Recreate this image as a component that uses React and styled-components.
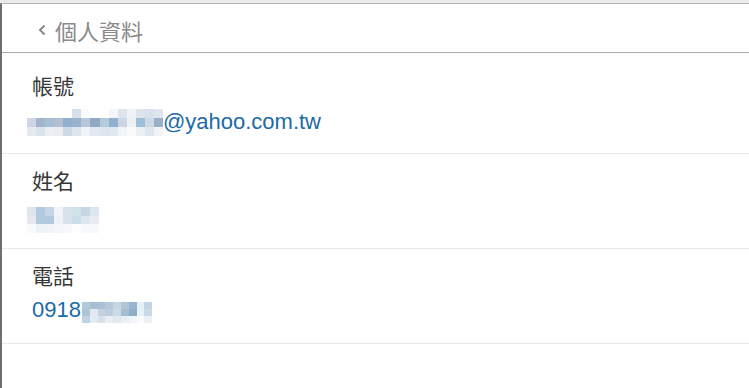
import React from "react";
import styled, { createGlobalStyle } from "styled-components";

const Global = createGlobalStyle`
  html, body { margin: 0; padding: 0; background: #ececec; }
  body { font-family: "Liberation Sans", "Noto Sans CJK TC", Arial, sans-serif; }
`;

const Page = styled.div`
  margin-top: 3px;
  min-height: 385px;
  box-sizing: border-box;
  background: #ffffff;
  border-top: 1px solid #b4b4b4;
  border-left: 2px solid #6f6f6f;
`;

const Header = styled.div`
  height: 49px;
  box-sizing: border-box;
  display: flex;
  align-items: center;
  gap: 8px;
  padding: 4px 0 0 36px;
  border-bottom: 1px solid #a9a9a9;
  color: #8a8a8a;
`;

const Title = styled.span`
  font-family: "Noto Sans CJK TC", sans-serif;
  font-size: 22px;
  line-height: 1;
  color: #8a8a8a;
`;

const Row = styled.div`
  box-sizing: border-box;
  height: ${(p) => (p.$first ? 101 : 95)}px;
  padding: ${(p) => (p.$first ? 16 : 10)}px 0 0 30px;
  border-bottom: 1px solid #e8e8e8;
`;

const Label = styled.div`
  font-family: "Noto Sans CJK TC", sans-serif;
  font-size: 21px;
  line-height: 32px;
  height: 32px;
  color: #363636;
`;

const Value = styled.div`
  margin-top: ${(p) => (p.$first ? 6 : 4)}px;
  height: 30px;
  display: flex;
  align-items: center;
  font-family: "Liberation Sans", Arial, sans-serif;
  font-size: 22px;
  color: #1c6aa6;
  white-space: nowrap;
`;

const Mosaic = styled.span`
  display: inline-grid;
  grid-template-columns: repeat(${(p) => p.$cols}, ${(p) => p.$cw}px);
  grid-auto-rows: ${(p) => p.$rh}px;
  margin-left: ${(p) => p.$ml}px;
  margin-top: ${(p) => p.$mt}px;
  flex: none;
`;

const Cell = styled.span`
  display: block;
`;

const emailCells = [
  ["#ffffff", "#ffffff", "#ffffff", "#ffffff", "#ffffff", "#d5e0ea", "#fbfcfd", "#ffffff", "#ffffff", "#f4f6f9", "#dde4ee", "#f0f3f6", "#dde4ee", "#d7e1ec", "#dfe5ee"],
  ["#cdd6e2", "#a4b6cc", "#a6bfd6", "#b4c0cf", "#8fb1cf", "#9ab3cc", "#b7c9d8", "#90aac6", "#b5cadb", "#90b0cf", "#cdd5e2", "#eef1f4", "#9dbfd9", "#cfd9e6", "#99afc8"],
  ["#e6eaf0", "#dbe3ec", "#ebeff4", "#eaecf2", "#ccd9e7", "#dee6ef", "#f0f3f8", "#e2e8f1", "#dde5ee", "#e0e8f0", "#f2f4f8", "#fafbfc", "#ebf0f5", "#dde6ef", "#f2f4f8"],
];

const nameCells = [
  ["#dde4ec", "#b1c9de", "#c5d6e5", "#f2f4f8", "#d8e2ea", "#d3e1ea", "#c8d6e4", "#dde6ef"],
  ["#e8e6ee", "#b3c9de", "#b3c9de", "#eef1f6", "#d8e2ea", "#cfdde8", "#dfe6ef", "#e6ecf2"],
  ["#f8f9fb", "#eef3f8", "#f0f4f8", "#f4f7fa", "#f6f8fb", "#fdfdfe", "#f8f9fb", "#f6f8fb"],
];

const phoneCells = [
  ["#b2c8dc", "#a7bfd4", "#a9c0d6", "#b5c9db", "#c7d6e3", "#b0c5d9", "#98b5cf", "#e6f0f6", "#c0d4e6"],
  ["#b0c4d7", "#e3eaf0", "#c2d2e1", "#bccede", "#cdd9e5", "#a5bcd1", "#8eadca", "#e8f2f8", "#cbd9e5"],
  ["#bed3e3", "#e3eaf2", "#d6e1eb", "#e9eef3", "#e1e8ef", "#eaeff5", "#f2f5f9", "#fafcfd", "#edf1f6"],
];

function Pixelated({ cells, cw, rh, ml = 0, mt = 0 }) {
  return (
    <Mosaic $cols={cells[0].length} $cw={cw} $rh={rh} $ml={ml} $mt={mt} aria-hidden="true">
      {cells.flat().map((c, i) => (
        <Cell key={i} style={{ background: c }} />
      ))}
    </Mosaic>
  );
}

function Chevron() {
  return (
    <svg width="9" height="12" viewBox="0 0 9 12" fill="none">
      <polyline points="6.5,1.5 2,6 6.5,10.5" stroke="#8a8a8a" strokeWidth="2" />
    </svg>
  );
}

export default function App() {
  return (
    <>
      <Global />
      <Page>
        <Header>
          <Chevron />
          <Title>個人資料</Title>
        </Header>
        <Row $first>
          <Label>帳號</Label>
          <Value $first>
            <Pixelated cells={emailCells} cw={9.07} rh={9} ml={-5} />
            <span>@yahoo.com.tw</span>
          </Value>
        </Row>
        <Row>
          <Label>姓名</Label>
          <Value>
            <Pixelated cells={nameCells} cw={9} rh={8.7} ml={-5} mt={10} />
          </Value>
        </Row>
        <Row>
          <Label>電話</Label>
          <Value>
            <span>0918</span>
            <Pixelated cells={phoneCells} cw={7.8} rh={7.3} ml={1} mt={5} />
          </Value>
        </Row>
      </Page>
    </>
  );
}
